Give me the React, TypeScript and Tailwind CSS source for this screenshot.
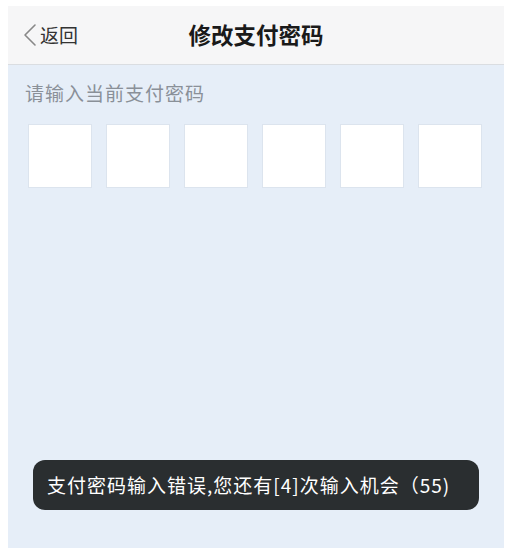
import React from 'react';

const cjk = { fontFamily: '"Noto Sans CJK SC", "Noto Sans", sans-serif' };

const PinBoxes: React.FC<{ count: number }> = ({ count }) => (
  <div className="flex gap-[14px] pl-[20px]">
    {Array.from({ length: count }).map((_, i) => (
      <div key={i} className="w-[64px] h-[64px] bg-white border border-[#dce4ee]" />
    ))}
  </div>
);

export default function App() {
  return (
    <div className="w-[511px] h-[555px] bg-white pt-[6px] pl-[8px] pr-[7px] pb-[7px]" style={cjk}>
      <div className="flex flex-col h-full bg-[#e6eef8]">
        {/* nav bar */}
        <div className="relative flex items-center h-[59px] bg-[#f6f6f7] border-b border-[#dadde1] shrink-0">
          <div className="flex items-center pl-[15px] text-[#333] text-[19px]">
            <svg width="14" height="24" viewBox="0 0 14 24" fill="none" className="mr-[3px]">
              <path d="M12 2 L2 12 L12 22" stroke="#888" strokeWidth="1.6" strokeLinecap="round" strokeLinejoin="round" />
            </svg>
            <span>返回</span>
          </div>
          <div className="absolute inset-0 flex items-center justify-center pointer-events-none">
            <span className="text-[22.5px] font-bold text-[#1a1a1a]">修改支付密码</span>
          </div>
        </div>

        <div className="pl-[17px] pt-[14px] pb-[16px] text-[19px] text-[#8a9098] tracking-[1px]">
          请输入当前支付密码
        </div>

        <PinBoxes count={6} />

        <div className="flex-1 flex items-end justify-center pb-[38px]">
          <div className="w-[446px] h-[50px] rounded-[12px] bg-[#2a2e30] flex items-center pl-[14px] text-white text-[19px] tracking-[1px]">
            支付密码输入错误,您还有[4]次输入机会（55)
          </div>
        </div>
      </div>
    </div>
  );
}
